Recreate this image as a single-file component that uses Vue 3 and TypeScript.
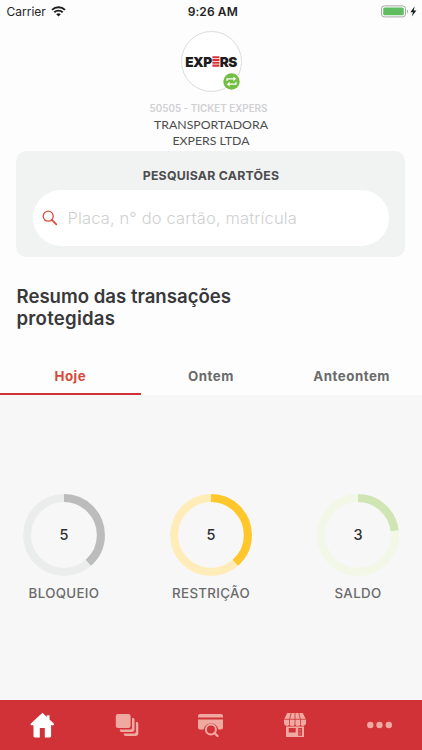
<script setup lang="ts">
interface Stat {
  label: string
  value: number
  color: string
  track: string
}

const stats: Stat[] = [
  { label: 'BLOQUEIO', value: 5, color: '#bcbcbc', track: '#ebeded' },
  { label: 'RESTRIÇÃO', value: 5, color: '#ffc72c', track: '#ffecb9' },
  { label: 'SALDO', value: 3, color: '#cfe6b4', track: '#f2f7e7' },
]
const total = stats.reduce((sum, s) => sum + s.value, 0)
const radius = 36.9
const circumference = 2 * Math.PI * radius
const dash = (value: number): string =>
  `${(circumference * value) / total} ${circumference}`
</script>

<template>
  <div class="screen">
    <header class="status">
      <div class="status-left">
        <span class="carrier">Carrier</span>
        <svg width="15" height="11" viewBox="0 0 15 11">
          <path d="M7.5 10.6 5.2 8.3a3.3 3.3 0 0 1 4.6 0z" fill="#1c1c1c" />
          <path d="M3.3 6.3a6 6 0 0 1 8.4 0M1 3.9a9.3 9.3 0 0 1 13 0" fill="none" stroke="#1c1c1c" stroke-width="1.9" />
        </svg>
      </div>
      <span class="time">9:26 AM</span>
      <svg class="battery" width="38" height="13" viewBox="0 0 38 13">
        <rect x="1.500" y=".9" width="24" height="11" rx="2.8" fill="#fff" stroke="#a3a6a3" />
        <rect x="3.200" y="2.5" width="20.6" height="7.8" rx="1.5" fill="#5fbd60" />
        <path d="M27 4.6c1.4.5 1.4 3.2 0 3.8z" fill="#a3a6a3" />
        <path d="M34.7 1.2 30.400 7.2h2.600l-1.2 4.3 4.6-6.1h-2.700z" fill="#1c1c1c" />
      </svg>
    </header>

    <section class="company">
      <div class="avatar">
        <span class="brand"><span class="exp">EXP</span><svg width="8" height="11" viewBox="0 0 8 11"><path d="M.4 1.2h7M.4 4h7M.4 6.8h7M.4 9.6h7" stroke="#d8333a" stroke-width="2.100" /></svg><span class="rs">RS</span></span>
        <svg class="swap" width="17" height="17" viewBox="0 0 17 17">
          <circle cx="8.5" cy="8.5" r="8.2" fill="#72bf44" />
          <path d="M4 8V5.800h7M13 8.800v2.400H6" fill="none" stroke="#fff" stroke-width="1.200" />
          <path d="M10.400 3.4 13.200 5.800l-2.800 2.400zM6.600 8.800 3.800 11.200l2.800 2.400z" fill="#fff" />
        </svg>
      </div>
      <div class="code">50505 - TICKET EXPERS</div>
      <div class="name"><div>TRANSPORTADORA</div><div>EXPERS LTDA</div></div>
    </section>

    <section class="search">
      <h2>PESQUISAR CARTÕES</h2>
      <div class="field">
        <svg width="16" height="16" viewBox="0 0 16 16" fill="none" stroke="#dd4b3e">
          <circle cx="6.2" cy="6.2" r="5" stroke-width="1.3" />
          <path d="m9.9 9.9 4.4 4.4" stroke-width="1.8" stroke-linecap="round" />
        </svg>
        <span class="placeholder">Placa, n° do cartão, matrícula</span>
      </div>
    </section>

    <h1>Resumo das transações<br /><span class="second">protegidas</span></h1>

    <nav class="tabs">
      <div class="tab active">Hoje</div>
      <div class="tab">Ontem</div>
      <div class="tab">Anteontem</div>
    </nav>

    <main class="stats">
      <div v-for="s in stats" :key="s.label" class="stat">
        <div class="donut">
          <svg width="82" height="82" viewBox="0 0 82 82" fill="none" stroke-width="8">
            <circle cx="41" cy="41" :r="radius" :stroke="s.track" />
            <circle cx="41" cy="41" :r="radius" :stroke="s.color" :stroke-dasharray="dash(s.value)" transform="rotate(-90 41 41)" />
          </svg>
          <span class="value">{{ s.value }}</span>
        </div>
        <div class="label">{{ s.label }}</div>
      </div>
    </main>

    <footer class="bottom">
      <div class="item">
        <svg width="25" height="26" viewBox="0 0 25 26">
          <path d="M12.5.8.9 11.6c-.7.8-.3 1.6.6 1.6h2V24c0 .9.5 1.4 1.4 1.4h4.900v-9.500h5v9.500h4.900c.9 0 1.4-.5 1.4-1.4V13.200h2c1 0 1.300-.8.6-1.600l-4.200-4V3.200h-2.800V5z" fill="#fff" />
        </svg>
      </div>
      <div class="item">
        <svg width="24" height="24" viewBox="0 0 24 24" fill="#efa9a1">
          <rect x=".8" y="1" width="14.800" height="14" rx="2.200" />
          <path d="M17 5h.8c1 0 1.700.7 1.700 1.700v9.600c0 1.700-.9 2.700-2.700 2.700H6.500c-1 0-1.700-.7-1.700-1.700v-.7h9.900c1.500 0 2.300-.8 2.300-2.300z" />
          <path d="M20.900 9h.7c1 0 1.700.7 1.700 1.700v9.500c0 1.800-1 2.700-2.700 2.700H10.500c-1 0-1.700-.7-1.700-1.700v-.7h9.800c1.500 0 2.300-.9 2.300-2.300z" />
        </svg>
      </div>
      <div class="item">
        <svg width="27" height="24" viewBox="0 0 27 24">
          <path d="M1 4.400V3.200C1 2 1.800 1 3 1h21c1.200 0 2 1 2 2.200v1.200zM1 6.400h25v8c0 1.200-.8 2-2 2h-2.700a7.500 7.500 0 0 0-14.600 0H3c-1.200 0-2-.8-2-2z" fill="#efa9a1" />
          <circle cx="13.900" cy="16.400" r="5" fill="none" stroke="#efa9a1" stroke-width="2" />
          <path d="m17.500 20 3 3" stroke="#efa9a1" stroke-width="2.300" stroke-linecap="round" />
        </svg>
      </div>
      <div class="item">
        <svg width="24" height="26" viewBox="0 0 24 26">
          <path d="M4.200 1h15.600l3.200 6.500v3.700a3 3 0 0 1-5.500 1.300 3.200 3.200 0 0 1-5.500 0 3.200 3.200 0 0 1-5.500 0A3 3 0 0 1 1 11.200V7.500zM3 14.600h18V25H3z" fill="#efa9a1" />
          <path d="M8.200 1 6.500 7.500v5M12 1v12M15.800 1l1.700 6.500v5M1 7.300h22" fill="none" stroke="#d03238" stroke-width=".8" />
          <path d="M5.700 16h7v4.600h-7zM15.200 16H19v7.800h-3.800z" fill="#d03238" />
          <path d="M16 17h2.200v2.200H16zm0 3h2.200v3H16z" fill="#dc5b5a" />
        </svg>
      </div>
      <div class="item">
        <svg width="26" height="8" viewBox="0 0 26 8" fill="#efa9a1">
          <circle cx="3.300" cy="4" r="3.200" /><circle cx="12.500" cy="4" r="3.200" /><circle cx="21.800" cy="4" r="3.200" />
        </svg>
      </div>
    </footer>
  </div>
</template>

<style>
body { background: #fdfdfd; }
</style>

<style scoped>
.screen {
  width: 422px;
  height: 750px;
  display: flex;
  flex-direction: column;
  overflow: hidden;
  background: #fdfdfd;
  font-family: Inter, "Liberation Sans", sans-serif;
  white-space: nowrap;
}
.status {
  display: grid;
  grid-template-columns: 1fr auto 1fr;
  align-items: center;
  height: 22px;
  padding: 0 4px 0 6.500px;
  color: #242424;
}
.status-left { display: flex; align-items: center; gap: 5px; }
.carrier { font-size: 12px; }
.time { font-size: 12px; font-weight: 600; padding-left: 1px; letter-spacing: .1px; }
.battery { justify-self: end; }
.company {
  display: flex;
  flex-direction: column;
  align-items: center;
  height: 129px;
  padding-top: 9px;
  box-sizing: border-box;
}
.avatar {
  position: relative;
  display: flex;
  align-items: center;
  justify-content: center;
  width: 61px;
  height: 61px;
  box-sizing: border-box;
  border: 1px solid #dcdcdf;
  border-radius: 50%;
  background: #fff;
}
.brand {
  display: flex;
  align-items: center;
  color: #1e1c1c;
  font-size: 13.600px;
  font-weight: 900;
  line-height: 14px;
}
.exp { letter-spacing: -.5px; }
.rs { letter-spacing: -.5px; }
.swap { position: absolute; right: 1px; bottom: 1px; }
.code {
  margin-top: 9px;
  font-size: 9.900px;
  line-height: 14px;
  font-weight: 600;
  color: #d0d0d3;
  margin-left: -5px;
}
.name {
  margin-top: 2px;
  font-family: Lato, sans-serif;
  font-size: 12.300px;
  line-height: 15.500px;
  color: #4d4d4d;
  text-align: center;
}
.search {
  height: 106px;
  margin: 0 17px 0 16px;
  padding: 17px 16px 0 17px;
  box-sizing: border-box;
  border-radius: 10px;
  background: #f1f3f3;
}
.search h2 {
  margin: 0 0 6px;
  font-size: 12.300px;
  line-height: 16px;
  height: 16px;
  font-weight: 700;
  letter-spacing: .25px;
  color: #4d4d4f;
  text-align: center;
}
.field {
  display: flex;
  align-items: center;
  gap: 9.500px;
  height: 56px;
  padding: 0 9px;
  border-radius: 28px;
  background: #fff;
}
.placeholder { font-size: 16.500px; font-weight: 300; letter-spacing: .14px; color: #cfd0d1; }
h1 {
  margin: 28px 0 0 16.500px;
  height: 44px;
  font-size: 18.600px;
  line-height: 22px;
  font-weight: 600;
  color: #38383b;
}
.second { letter-spacing: .25px; }
.tabs {
  display: grid;
  grid-template-columns: repeat(3, 1fr);
  height: 38px;
  margin-top: 28px;
}
.tab {
  display: flex;
  justify-content: center;
  box-sizing: border-box;
  padding-top: 10px;
  font-size: 13.300px;
  line-height: 18px;
  font-weight: 700;
  letter-spacing: .5px;
  color: #6a6a6b;
  border-bottom: 2px solid transparent;
}
.active { color: #d74a3b; border-bottom-color: #d03238; }
.stats {
  flex: 1;
  display: flex;
  justify-content: space-between;
  padding: 99px 23px 0;
  background: #f7f7f7;
}
.stat { width: 82px; display: flex; flex-direction: column; align-items: center; }
.donut { display: grid; place-items: center; }
.donut > * { grid-area: 1 / 1; }
.donut svg { display: block; }
.value { font-size: 14.500px; font-weight: 500; color: #303033; padding-bottom: 1px; }
.label {
  margin-top: 7px;
  font-size: 13.300px;
  line-height: 20px;
  font-weight: 500;
  letter-spacing: .35px;
  color: #6a6a6b;
}
.bottom {
  display: grid;
  grid-template-columns: repeat(5, 1fr);
  height: 50px;
  background: #d03238;
}
.item { display: flex; align-items: center; justify-content: center; }
.item svg { display: block; }
</style>
